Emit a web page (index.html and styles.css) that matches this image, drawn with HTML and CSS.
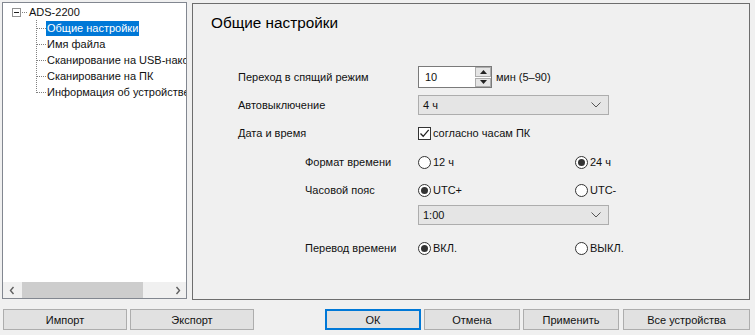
FILE: index.html
```html
<!DOCTYPE html>
<html lang="ru">
<head>
<meta charset="utf-8">
<title>Настройки</title>
<link rel="stylesheet" href="styles.css">
</head>
<body>
<div class="window">
  <div class="main">
    <div class="tree">
      <div class="tree-body">
        <div class="root">
          <span class="expander"><span class="minus"></span></span>
          <span class="hdots"></span>
          <span class="node-text">ADS-2200</span>
        </div>
        <div class="children">
          <div class="child"><span class="hdots2"></span><span class="node-text selected">Общие настройки</span></div>
          <div class="child"><span class="hdots2"></span><span class="node-text">Имя файла</span></div>
          <div class="child"><span class="hdots2"></span><span class="node-text">Сканирование на USB-накопитель</span></div>
          <div class="child"><span class="hdots2"></span><span class="node-text">Сканирование на ПК</span></div>
          <div class="child"><span class="hdots2"></span><span class="node-text">Информация об устройстве</span></div>
        </div>
      </div>
      <div class="hscroll">
        <span class="arrow">
          <svg width="6" height="9" viewBox="0 0 6 9"><path d="M4.5 1 L1.5 4.5 L4.5 8" fill="none" stroke="#606060" stroke-width="1.4"/></svg>
        </span>
        <span class="track"><span class="thumb"></span></span>
        <span class="arrow">
          <svg width="6" height="9" viewBox="0 0 6 9"><path d="M1.5 1 L4.5 4.5 L1.5 8" fill="none" stroke="#606060" stroke-width="1.4"/></svg>
        </span>
      </div>
    </div>
    <div class="panel">
      <div class="title">Общие настройки</div>
      <div class="form">
        <div class="row r1">
          <span class="label">Переход в спящий режим</span>
          <div class="ctrl">
            <div class="spin">
              <span class="spin-val">10</span>
              <span class="spin-btns">
                <span class="sbtn"><svg width="7" height="4" viewBox="0 0 7 4"><path d="M0 4 L3.5 0 L7 4Z" fill="#222"/></svg></span>
                <span class="sbtn"><svg width="7" height="4" viewBox="0 0 7 4"><path d="M0 0 L3.5 4 L7 0Z" fill="#222"/></svg></span>
              </span>
            </div>
            <span class="unit">мин (5–90)</span>
          </div>
        </div>
        <div class="row r2">
          <span class="label">Автовыключение</span>
          <div class="ctrl">
            <div class="combo"><span>4 ч</span>
              <svg width="10" height="6" viewBox="0 0 10 6"><path d="M0.5 0.5 L5 5 L9.5 0.5" fill="none" stroke="#555" stroke-width="1"/></svg>
            </div>
          </div>
        </div>
        <div class="row r3">
          <span class="label">Дата и время</span>
          <div class="ctrl">
            <span class="check"><svg width="11" height="11" viewBox="0 0 11 11"><path d="M1.5 5.5 L4.2 8.3 L9.7 1.8" fill="none" stroke="#222" stroke-width="1.3"/></svg></span>
            <span class="opt-text">согласно часам ПК</span>
          </div>
        </div>
        <div class="row r4 sub">
          <span class="label">Формат времени</span>
          <div class="ctrl">
            <span class="opt first"><span class="radio"></span><span class="opt-text">12 ч</span></span>
            <span class="opt"><span class="radio on"></span><span class="opt-text">24 ч</span></span>
          </div>
        </div>
        <div class="row r5 sub">
          <span class="label">Часовой пояс</span>
          <div class="ctrl">
            <span class="opt first"><span class="radio on"></span><span class="opt-text">UTC+</span></span>
            <span class="opt"><span class="radio"></span><span class="opt-text">UTC-</span></span>
          </div>
        </div>
        <div class="row r6 sub">
          <span class="label"></span>
          <div class="ctrl">
            <div class="combo"><span>1:00</span>
              <svg width="10" height="6" viewBox="0 0 10 6"><path d="M0.5 0.5 L5 5 L9.5 0.5" fill="none" stroke="#555" stroke-width="1"/></svg>
            </div>
          </div>
        </div>
        <div class="row r7 sub">
          <span class="label">Перевод времени</span>
          <div class="ctrl">
            <span class="opt first"><span class="radio on"></span><span class="opt-text">ВКЛ.</span></span>
            <span class="opt"><span class="radio"></span><span class="opt-text">ВЫКЛ.</span></span>
          </div>
        </div>
      </div>
    </div>
  </div>
  <div class="buttons">
    <div class="left-btns">
      <button class="btn wide">Импорт</button>
      <button class="btn wide">Экспорт</button>
    </div>
    <div class="right-btns">
      <button class="btn std default">ОК</button>
      <button class="btn std">Отмена</button>
      <button class="btn std">Применить</button>
      <button class="btn all">Все устройства</button>
    </div>
  </div>
</div>
</body>
</html>
```

FILE: styles.css
```css
* { box-sizing: border-box; }
html, body { margin: 0; padding: 0; }
body {
  background: #f0f0f0;
  font-family: "Liberation Sans", Arial, sans-serif;
  font-size: 11px;
  color: #111;
  width: 755px;
  height: 335px;
  overflow: hidden;
}
.window { padding: 2px 5px 0 2px; }
.main { display: flex; gap: 5px; height: 298px; }

/* tree */
.tree {
  width: 185px;
  height: 297px;
  background: #fff;
  border: 1px solid #828790;
  display: flex;
  flex-direction: column;
  overflow: hidden;
}
.tree-body { flex: 1; padding: 1px 0 0 9px; overflow: hidden; }
.root { display: flex; align-items: center; height: 16px; }
.expander {
  width: 9px; height: 9px;
  border: 1px solid #919191;
  display: flex; align-items: center; justify-content: center;
  flex: none;
}
.minus { width: 5px; height: 1px; background: #1f1f1f; }
.hdots { width: 5px; border-top: 1px dotted #808080; margin: 0 1px 0 1px; flex: none; }
.node-text { white-space: nowrap; padding: 0 1px; line-height: 15px; }
.children {
  margin-left: 24px;
  border-left: 1px dotted #808080;
  height: 73px;
}
.child { display: flex; align-items: center; height: 16px; white-space: nowrap; }
.hdots2 { width: 9px; border-top: 1px dotted #808080; flex: none; }
.selected { background: #0078d7; color: #fff; }

.hscroll { height: 16px; display: flex; align-items: center; background: #f0f0f0; }
.arrow { width: 17px; height: 16px; display: flex; align-items: center; justify-content: center; flex: none; }
.track { flex: 1; height: 16px; display: flex; align-items: stretch; }
.thumb { width: 121px; background: #cdcdcd; margin-left: 2px; }

/* panel */
.panel {
  width: 558px;
  height: 297px;
  margin-top: 1px;
  border: 1px solid #6d6d6d;
  display: flex;
  flex-direction: column;
}
.title {
  font-size: 15.3px;
  padding: 9px 0 0 18px;
  height: 62px;
  line-height: 20px;
  color: #000;
}
.form { padding-left: 45px; display: flex; flex-direction: column; }
.row { display: flex; align-items: center; }
.label { width: 180px; flex: none; white-space: nowrap; }
.sub .label { width: 113px; margin-left: 67px; }
.ctrl { display: flex; align-items: center; }
.r1 { height: 22px; }
.r2 { height: 20px; margin-top: 7px; }
.r3 { height: 18px; margin-top: 9px; }
.r4 { height: 18px; margin-top: 11px; }
.r5 { height: 18px; margin-top: 10px; }
.r6 { height: 20px; margin-top: 6px; }
.r7 { height: 18px; margin-top: 14px; }

.spin {
  width: 74px; height: 22px;
  background: #fff;
  border: 1px solid #7a7a7a;
  display: flex;
  justify-content: space-between;
}
.spin-val { padding: 2px 0 0 6px; line-height: 16px; }
.spin-btns { display: flex; flex-direction: column; width: 16px; gap: 1px; }
.sbtn {
  flex: 1;
  background: #e5e5e5;
  border: 1px solid #adadad;
  display: flex; align-items: center; justify-content: center;
}
.unit { margin-left: 4px; }

.combo {
  width: 191px; height: 20px;
  background: #e5e5e5;
  border: 1px solid #adadad;
  display: flex; align-items: center; justify-content: space-between;
  padding: 0 7px 0 4px;
}

.check {
  width: 13px; height: 13px;
  border: 1px solid #333;
  background: #fff;
  display: flex; align-items: center; justify-content: center;
}
.opt-text { margin-left: 2px; }
.opt { display: flex; align-items: center; }
.opt.first { width: 157px; }
.radio {
  width: 13px; height: 13px;
  border: 1px solid #333;
  border-radius: 50%;
  background: #fff;
  display: flex; align-items: center; justify-content: center;
  flex: none;
}
.radio.on::after {
  content: "";
  width: 7px; height: 7px;
  border-radius: 50%;
  background: #333;
}

/* buttons */
.buttons {
  display: flex;
  justify-content: space-between;
  margin-top: 9px;
  padding-left: 1px;
}
.left-btns, .right-btns { display: flex; gap: 3px; }
.btn {
  font-family: inherit;
  font-size: 11px;
  height: 21px;
  background: #e1e1e1;
  border: 1px solid #adadad;
  color: #111;
  padding: 0;
  margin: 0;
}
.wide { width: 124px; }
.std { width: 96px; }
.all { width: 127px; margin-left: 1px; }
.default { border: 2px solid #0078d7; }
```
